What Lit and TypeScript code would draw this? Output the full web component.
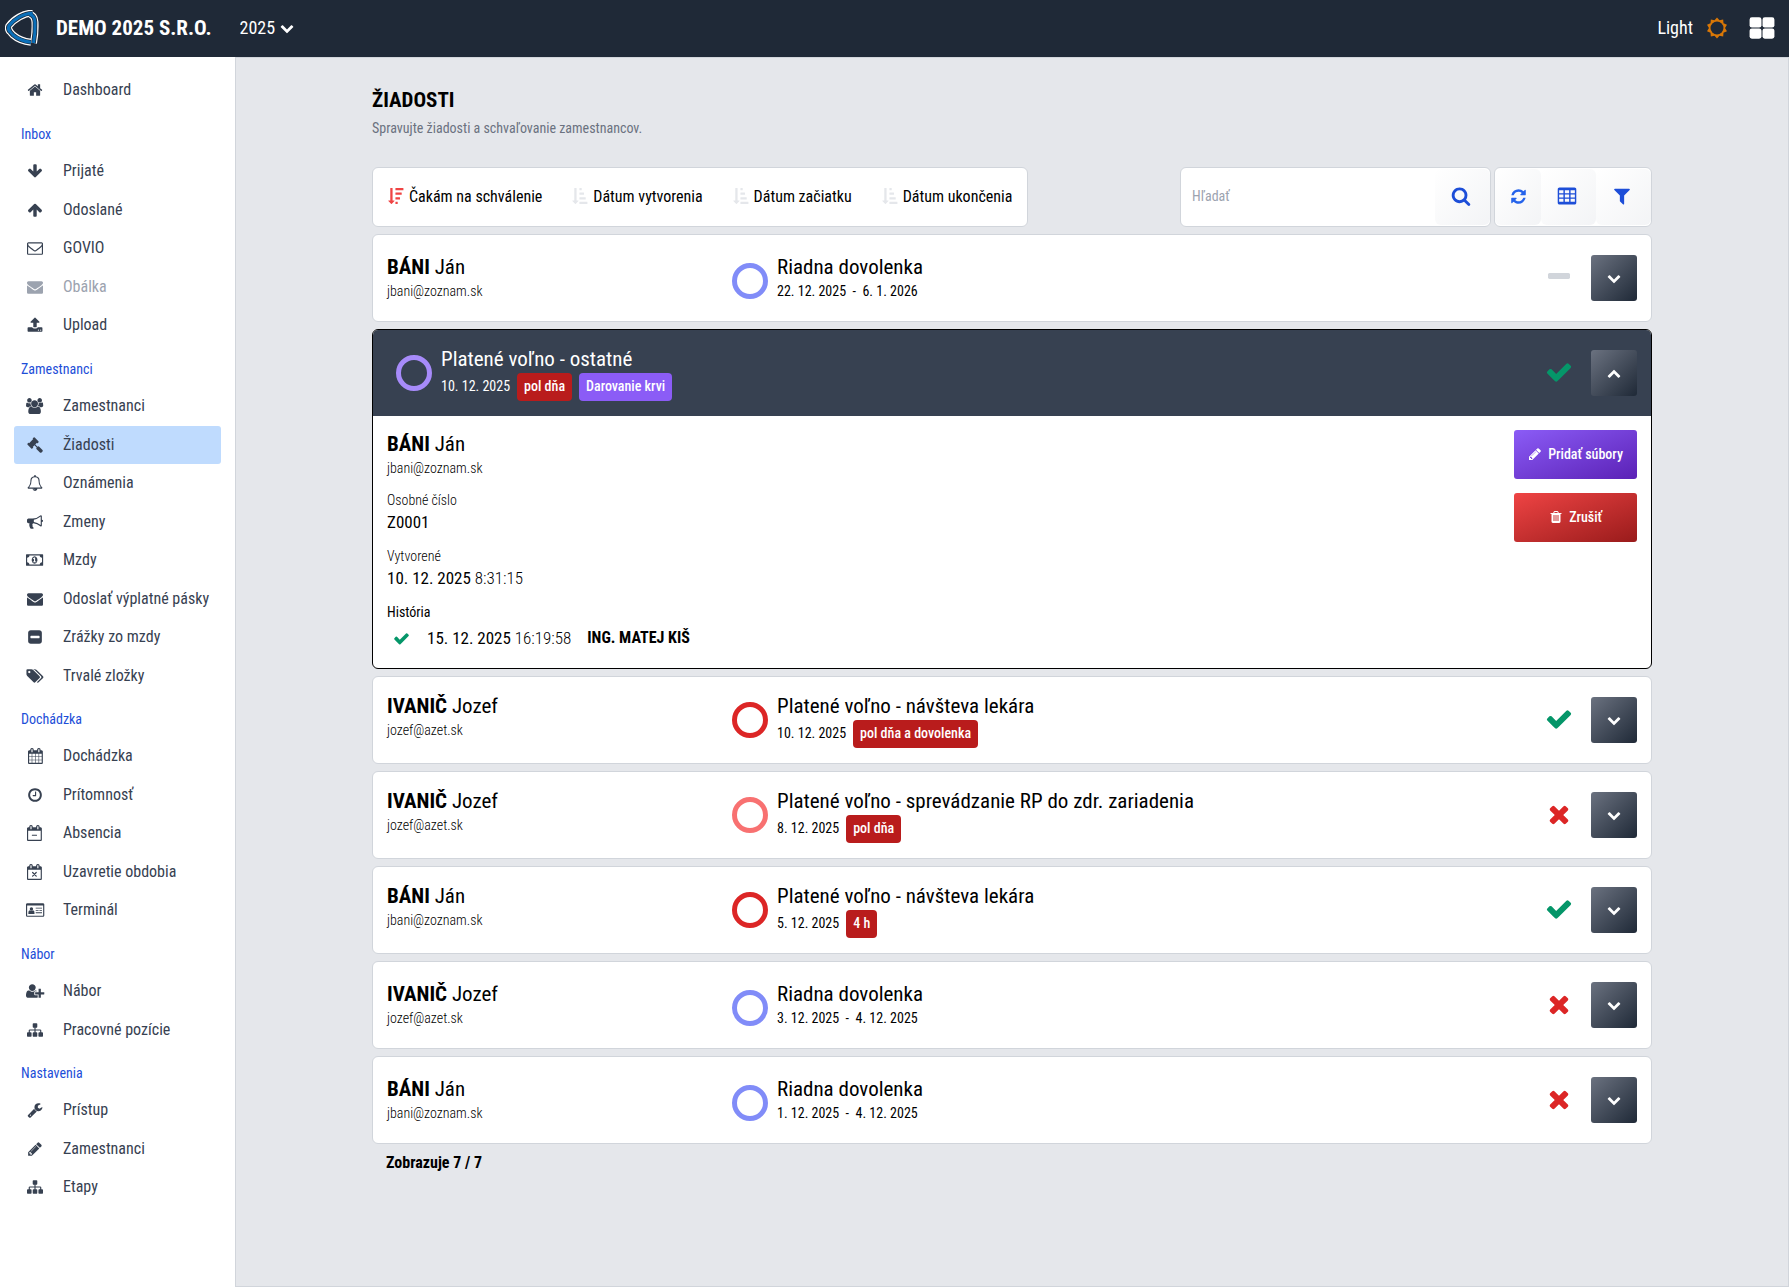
import { LitElement, html, svg, css, nothing } from "lit";
import { customElement, property } from "lit/decorators.js";
import { classMap } from "lit/directives/class-map.js";

const CAL =
  "M1536 256q52 0 90 38t38 90v1280q0 52-38 90t-90 38h-1408q-52 0-90-38t-38-90v-1280q0-52 38-90t90-38h128v-96q0-66 47-113t113-47h64q66 0 113 47t47 113v96h384v-96q0-66 47-113t113-47h64q66 0 113 47t47 113v96h128zm-384-96v288q0 14 9 23t23 9h64q14 0 23-9t9-23v-288q0-14-9-23t-23-9h-64q-14 0-23 9t-9 23zm-768 0v288q0 14 9 23t23 9h64q14 0 23-9t9-23v-288q0-14-9-23t-23-9h-64q-14 0-23 9t-9 23zm1152 1504v-1024h-1408v1024h1408z";
const SORT_ARROW =
  "M736 1440q0 12-10 24l-319 319q-10 9-23 9-12 0-23-9l-320-320q-15-16-7-35 8-20 30-20h192v-1376q0-14 9-23t23-9h192q14 0 23 9t9 23v1376h192q14 0 23 9t9 23z";

const sunPoints = Array.from({ length: 20 }, (_, i) => {
  const r = i % 2 ? 720 : 940;
  const a = (Math.PI * i) / 10 - Math.PI / 2;
  return `${Math.round(896 + r * Math.cos(a))},${Math.round(896 + r * Math.sin(a))}`;
}).join(" ");

const p = (d: string) => svg`<path d=${d}></path>`;

/* Each glyph: drawing, then width of its em box (height is always 1792). */
const ICONS: Record<string, [unknown, number]> = {
  home: [p("M1472 992v480q0 26-19 45t-45 19h-384v-384h-256v384h-384q-26 0-45-19t-19-45v-480q0-1 .5-3t.5-3l575-474 575 474q1 2 1 6zm223-69l-62 74q-8 9-21 11h-3q-13 0-21-7l-692-577-692 577q-12 8-24 7-13-2-21-11l-62-74q-8-10-7-23.5t11-21.5l719-599q32-26 76-26t76 26l244 204v-195q0-14 9-23t23-9h192q14 0 23 9t9 23v408l219 182q10 8 11 21.5t-7 23.5z"), 1792],
  down: [p("M1675 832q0 53-37 90l-651 652q-39 37-91 37-53 0-90-37l-651-652q-38-36-38-90 0-53 38-91l74-75q39-37 91-37 53 0 90 37l294 294v-704q0-52 38-90t90-38h128q52 0 90 38t38 90v704l294-294q37-37 90-37 52 0 91 37l75 75q37 39 37 91z"), 1792],
  up: [p("M1675 971q0 51-37 90l-75 75q-38 38-91 38-54 0-90-38l-294-293v704q0 52-37.5 84.5t-90.5 32.5h-128q-53 0-90.5-32.5t-37.5-84.5v-704l-294 293q-36 38-90 38t-90-38l-75-75q-38-38-38-90 0-53 38-91l651-651q35-37 90-37 54 0 91 37l651 651q37 39 37 91z"), 1792],
  mailo: [p("M1664 1504v-768q-32 36-69 66-268 206-426 338-51 43-83 67t-86.5 48.5-102.5 24.5h-2q-48 0-102.5-24.5t-86.5-48.5-83-67q-158-132-426-338-37-30-69-66v768q0 13 9.5 22.5t22.5 9.5h1472q13 0 22.5-9.5t9.5-22.5zm0-1051v-24.5l-.5-13-3-12.5-5.5-9-9-7.5-14-2.5h-1472q-13 0-22.5 9.5t-9.5 22.5q0 168 147 284 193 152 401 317 6 5 35 29.5t46 37.5 44.5 31.5 50.5 27.5 43 9h2q20 0 43-9t50.5-27.5 44.5-31.5 46-37.5 35-29.5q208-165 401-317 54-43 100.5-115.5t46.5-131.5zm128-37v1088q0 66-47 113t-113 47h-1472q-66 0-113-47t-47-113v-1088q0-66 47-113t113-47h1472q66 0 113 47t47 113z"), 1792],
  mail: [p("M1792 710v794q0 66-47 113t-113 47h-1472q-66 0-113-47t-47-113v-794q44 49 101 87 362 246 497 345 57 42 92.5 65.5t94.5 48 110 24.5h2q51 0 110-24.5t94.5-48 92.5-65.5q170-123 498-345 57-39 100-87zm0-294q0 79-49 151t-122 123q-376 261-468 325-10 7-42.5 30.5t-54 38-52 32.5-57.5 27-50 9h-2q-23 0-50-9t-57.5-27-52-32.5-54-38-42.5-30.5q-91-64-262-182.5t-205-142.5q-62-42-117-115.5t-55-136.5q0-78 41.5-130t118.5-52h1472q65 0 112.5 47t47.5 113z"), 1792],
  upload: [p("M1344 1472q0-26-19-45t-45-19-45 19-19 45 19 45 45 19 45-19 19-45zm256 0q0-26-19-45t-45-19-45 19-19 45 19 45 45 19 45-19 19-45zm128-224v320q0 40-28 68t-68 28h-1472q-40 0-68-28t-28-68v-320q0-40 28-68t68-28h427q21 56 70.5 92t110.5 36h256q61 0 110.5-36t70.5-92h427q40 0 68 28t28 68zm-325-648q-17 40-59 40h-256v448q0 26-19 45t-45 19h-256q-26 0-45-19t-19-45v-448h-256q-42 0-59-40-17-39 14-69l448-448q18-19 45-19t45 19l448 448q31 30 14 69z"), 1728],
  users: [svg`<g transform="translate(64 0)">${p("M529 896q-162 5-265 128h-134q-82 0-138-40.5t-56-118.5q0-353 124-353 6 0 43.5 21t97.5 42.5 119 21.5q67 0 133-23-5 37-5 66 0 159 93 290zm1071 637q0 120-73 189.5t-194 69.5h-874q-121 0-194-69.5t-73-189.5q0-53 3.5-103.5t14-109 26.5-108.5 43-97.5 62-81 85.5-53.5 111.5-20q10 0 43 21.5t73 48 107 48 135 21.5 135-21.5 107-48 73-48 43-21.5q61 0 111.5 20t85.5 53.5 62 81 43 97.5 26.5 108.5 14 109 3.5 103.5zm-1024-1277q0 106-75 181t-181 75-181-75-75-181 75-181 181-75 181 75 75 181zm704 384q0 159-112.5 271.5t-271.5 112.5-271.5-112.5-112.5-271.5 112.5-271.5 271.5-112.5 271.5 112.5 112.5 271.5zm576 225q0 78-56 118.5t-138 40.5h-134q-103-123-265-128 93-131 93-290 0-29-5-66 66 23 133 23 59 0 119-21.5t97.5-42.5 43.5-21q124 0 124 353zm-128-609q0 106-75 181t-181 75-181-75-75-181 75-181 181-75 181 75 75 181z")}</g>`, 1920],
  gavel: [p("M1771 1536q0 53-37 90l-107 108q-39 37-91 37-53 0-90-37l-363-364q-38-36-38-90 0-53 43-96l-256-256-126 126q-14 14-34 14t-34-14q2 2 12.5 12t12.5 13 10 11.5 10 13.5 6 13.5 5.5 16.5 1.5 18q0 38-28 68-3 3-16.5 18t-19 20.5-18.5 16.5-22 15.5-22 9-26 4.5q-40 0-68-28l-408-408q-28-28-28-68 0-13 4.5-26t9-22 15.5-22 16.5-18.5 20.5-19 18-16.5q30-28 68-28 10 0 18 1.5t16.5 5.5 13.5 6 13.5 10 11.5 10 13 12.5 12 12.5q-14-14-14-34t14-34l348-348q14-14 34-14t34 14q-2-2-12.5-12t-12.5-13-10-11.5-10-13.5-6-13.5-5.5-16.5-1.5-18q0-38 28-68 3-3 16.5-18t19-20.5 18.5-16.5 22-15.5 22-9 26-4.5q40 0 68 28l408 408q28 28 28 68 0 13-4.5 26t-9 22-15.5 22-16.5 18.5-20.5 19-18 16.5q-30 28-68 28-10 0-18-1.5t-16.5-5.5-13.5-6-13.5-10-11.5-10-13-12.5-12-12.5q14 14 14 34t-14 34l-126 126 256 256q43-43 96-43 52 0 91 37l363 363q37 39 37 91z"), 1792],
  bell: [p("M912 1696q0-16-16-16-59 0-101.5-42.5t-42.5-101.5q0-16-16-16t-16 16q0 73 51.5 124.5t124.5 51.5q16 0 16-16zm-666-288h1300q-266-300-266-832 0-51-24-105t-69-103-121.5-80.5-169.5-31.5-169.5 31.5-121.5 80.5-69 103-24 105q0 532-266 832zm1482 0q0 52-38 90t-90 38h-448q0 106-75 181t-181 75-181-75-75-181h-448q-52 0-90-38t-38-90q50-42 91-88t85-119.5 74.5-158.5 50-206 19.5-260q0-152 117-282.5t307-158.5q-8-19-8-39 0-40 28-68t68-28 68 28 28 68q0 20-8 39 190 28 307 158.5t117 282.5q0 139 19.5 260t50 206 74.5 158.5 85 119.5 91 88z"), 1792],
  horn: [p("M1664 640q53 0 90.5 37.5t37.5 90.5-37.5 90.5-90.5 37.5v384q0 52-38 90t-90 38q-417-347-812-380-58 19-91 66t-31 100.5 40 92.5q-20 33-23 65.5t6 58 33.5 55 48 50 61.5 50.5q-29 58-111.5 83t-168.5 11.5-132-55.5q-7-23-29.5-87.5t-32-94.5-23-89-15-101 3.5-98.5 22-110.5h-122q-66 0-113-47t-47-113v-192q0-66 47-113t113-47h480q435 0 896-384 52 0 90 38t38 90v384zm-128 604v-954q-394 302-768 343v270q377 42 768 341z"), 1792],
  money: [p("M768 1152h384v-96h-128v-448h-114l-148 137 77 80q42-37 55-57h2v288h-128v96zm512-256q0 70-21 142t-59.5 134-101.5 101-138 39-138-39-101.5-101-59.5-134-21-142 21-142 59.5-134 101.5-101 138-39 138 39 101.5 101 59.5 134 21 142zm512 256v-512q-106 0-181-75t-75-181h-1152q0 106-75 181t-181 75v512q106 0 181 75t75 181h1152q0-106 75-181t181-75zm128-832v1152q0 26-19 45t-45 19h-1792q-26 0-45-19t-19-45v-1152q0-26 19-45t45-19h1792q26 0 45 19t19 45z"), 1920],
  minussq: [p("M1408 960v-128q0-26-19-45t-45-19h-896q-26 0-45 19t-19 45v128q0 26 19 45t45 19h896q26 0 45-19t19-45zm256-544v960q0 119-84.5 203.5t-203.5 84.5h-960q-119 0-203.5-84.5t-84.5-203.5v-960q0-119 84.5-203.5t203.5-84.5h960q119 0 203.5 84.5t84.5 203.5z"), 1792],
  tags: [p("M384 448q0-53-37.5-90.5t-90.5-37.5-90.5 37.5-37.5 90.5 37.5 90.5 90.5 37.5 90.5-37.5 37.5-90.5zm1067 576q0 53-37 90l-491 492q-39 37-91 37-53 0-90-37l-715-716q-38-37-64.5-101t-26.5-117v-416q0-52 38-90t90-38h416q53 0 117 26.5t102 64.5l715 714q37 39 37 91zm384 0q0 53-37 90l-491 492q-39 37-91 37-36 0-59-14t-53-45l470-470q37-37 37-90 0-52-37-91l-715-714q-38-38-102-64.5t-117-26.5h224q53 0 117 26.5t102 64.5l715 714q37 39 37 91z"), 1856],
  cal: [svg`<g transform="translate(-64 0)">${p("M192 1664h288v-288h-288v288zm352 0h320v-288h-320v288zm-352-352h288v-320h-288v320zm352 0h320v-320h-320v320zm-352-384h288v-288h-288v288zm736 736h320v-288h-320v288zm-384-736h320v-288h-320v288zm768 736h288v-288h-288v288zm-384-352h320v-320h-320v320zm-352-864v-288q0-13-9.5-22.5t-22.5-9.5h-64q-13 0-22.5 9.5t-9.5 22.5v288q0 13 9.5 22.5t22.5 9.5h64q13 0 22.5-9.5t9.5-22.5zm736 864h288v-320h-288v320zm-384-384h320v-288h-320v288zm384 0h288v-288h-288v288zm32-480v-288q0-13-9.5-22.5t-22.5-9.5h-64q-13 0-22.5 9.5t-9.5 22.5v288q0 13 9.5 22.5t22.5 9.5h64q13 0 22.5-9.5t9.5-22.5zm384-64v1280q0 52-38 90t-90 38h-1408q-52 0-90-38t-38-90v-1280q0-52 38-90t90-38h128v-96q0-66 47-113t113-47h64q66 0 113 47t47 113v96h384v-96q0-66 47-113t113-47h64q66 0 113 47t47 113v96h128q52 0 90 38t38 90z")}</g>`, 1664],
  clock: [p("M1024 544v448q0 14-9 23t-23 9h-320q-14 0-23-9t-9-23v-64q0-14 9-23t23-9h224v-352q0-14 9-23t23-9h64q14 0 23 9t9 23zm416 352q0-148-73-273t-198-198-273-73-273 73-198 198-73 273 73 273 198 198 273 73 273-73 198-198 73-273zm224 0q0 209-103 385.5t-279.5 279.5-385.5 103-385.5-103-279.5-279.5-103-385.5 103-385.5 279.5-279.5 385.5-103 385.5 103 279.5 279.5 103 385.5z"), 1792],
  calminus: [svg`${p(CAL)}<rect x="544" y="1088" width="576" height="128" rx="32"></rect>`, 1792],
  caltimes: [svg`${p(CAL)}<path d="M630 950l404 404M1034 950l-404 404" fill="none" stroke="currentColor" stroke-width="136" stroke-linecap="round"></path>`, 1792],
  card: [svg`<path fill-rule="evenodd" d="M160 128h1728q66 0 113 47t47 113v1216q0 66-47 113t-113 47h-1728q-66 0-113-47t-47-113v-1216q0-66 47-113t113-47zM128 384v1120q0 32 32 32h1728q32 0 32-32v-1120z"></path><circle cx="608" cy="780" r="190"></circle><path d="M256 1248q0-310 180-320 172 130 344 0 180 10 180 320 0 96-96 96h-512q-96 0-96-96zM1088 640h704v96h-704zM1088 896h320v96h-320zM1504 896h288v96h-288zM1088 1152h704v96h-704z"></path>`, 2048],
  userplus: [p("M704 896q-159 0-271.5-112.5t-112.5-271.5 112.5-271.5 271.5-112.5 271.5 112.5 112.5 271.5-112.5 271.5-271.5 112.5zm960 128h352q13 0 22.5 9.5t9.5 22.5v192q0 13-9.5 22.5t-22.5 9.5h-352v352q0 13-9.5 22.5t-22.5 9.5h-192q-13 0-22.5-9.5t-9.5-22.5v-352h-352q-13 0-22.5-9.5t-9.5-22.5v-192q0-13 9.5-22.5t22.5-9.5h352v-352q0-13 9.5-22.5t22.5-9.5h192q13 0 22.5 9.5t9.5 22.5v352zm-736 224q0 52 38 90t90 38h256v238q-68 50-171 50h-874q-121 0-194-69t-73-190q0-53 3.5-103.5t14-109 26.5-108.5 43-97.5 62-81 85.5-53.5 111.5-20q19 0 39 17 79 61 154.5 91.5t164.5 30.5 164.5-30.5 154.5-91.5q20-17 39-17 132 0 217 96h-223q-52 0-90 38t-38 90v192z"), 2048],
  sitemap: [p("M1792 1248v320q0 40-28 68t-68 28h-320q-40 0-68-28t-28-68v-320q0-40 28-68t68-28h96v-192h-512v192h96q40 0 68 28t28 68v320q0 40-28 68t-68 28h-320q-40 0-68-28t-28-68v-320q0-40 28-68t68-28h96v-192h-512v192h96q40 0 68 28t28 68v320q0 40-28 68t-68 28h-320q-40 0-68-28t-28-68v-320q0-40 28-68t68-28h96v-192q0-52 38-90t90-38h512v-192h-96q-40 0-68-28t-28-68v-320q0-40 28-68t68-28h320q40 0 68 28t28 68v320q0 40-28 68t-68 28h-96v192h512q52 0 90 38t38 90v192h96q40 0 68 28t28 68z"), 1792],
  wrench: [p("M448 1472q0-26-19-45t-45-19-45 19-19 45 19 45 45 19 45-19 19-45zm644-420l-682 682q-37 37-90 37-52 0-91-37l-106-108q-38-36-38-90 0-53 38-91l681-681q39 98 114.5 173.5t173.5 114.5zm634-435q0 39-23 106-47 134-164.5 217.5t-258.5 83.5q-185 0-316.5-131.5t-131.5-316.5 131.5-316.5 316.5-131.5q58 0 121.5 16.5t107.5 46.5q16 11 16 28t-16 28l-293 169v224l193 107q5-3 79-48.5t135.5-81 70.5-35.5q15 0 23.5 10t8.5 25z"), 1792],
  pencil: [p("M491 1536l91-91-235-235-91 91v107h128v128h107zm523-928q0-22-22-22-10 0-17 7l-542 542q-7 7-7 17 0 22 22 22 10 0 17-7l542-542q7-7 7-17zm-54-192l416 416-832 832h-416v-416zm683 96q0 53-37 90l-166 166-416-416 166-165q36-38 90-38 53 0 91 38l235 234q37 39 37 91z"), 1792],
  trash: [p("M704 1376v-704q0-14-9-23t-23-9h-64q-14 0-23 9t-9 23v704q0 14 9 23t23 9h64q14 0 23-9t9-23zm256 0v-704q0-14-9-23t-23-9h-64q-14 0-23 9t-9 23v704q0 14 9 23t23 9h64q14 0 23-9t9-23zm256 0v-704q0-14-9-23t-23-9h-64q-14 0-23 9t-9 23v704q0 14 9 23t23 9h64q14 0 23-9t9-23zm-544-992h448l-48-117q-7-9-17-11h-317q-10 2-17 11zm928 32v64q0 14-9 23t-23 9h-96v948q0 83-47 143.5t-113 60.5h-832q-66 0-113-58.5t-47-141.5v-952h-96q-14 0-23-9t-9-23v-64q0-14 9-23t23-9h309l70-167q15-37 54-63t79-26h320q40 0 79 26t54 63l70 167h309q14 0 23 9t9 23z"), 1792],
  check: [p("M1671 566q0 40-28 68l-724 724-136 136q-28 28-68 28t-68-28l-136-136-362-362q-28-28-28-68t28-68l136-136q28-28 68-28t68 28l294 295 656-657q28-28 68-28t68 28l136 136q28 28 28 68z"), 1792],
  times: [p("M1490 1322q0 40-28 68l-136 136q-28 28-68 28t-68-28l-294-294-294 294q-28 28-68 28t-68-28l-136-136q-28-28-28-68t28-68l294-294-294-294q-28-28-28-68t28-68l136-136q28-28 68-28t68 28l294 294 294-294q28-28 68-28t68 28l136 136q28 28 28 68t-28 68l-294 294 294 294q28 28 28 68z"), 1792],
  minus: [p("M1600 736v192q0 40-28 68t-68 28h-1216q-40 0-68-28t-28-68v-192q0-40 28-68t68-28h1216q40 0 68 28t28 68z"), 1792],
  chevdown: [p("M1683 808l-742 741q-19 19-45 19t-45-19l-742-741q-19-19-19-45.5t19-45.5l166-165q19-19 45-19t45 19l531 531 531-531q19-19 45-19t45 19l166 165q19 19 19 45.5t-19 45.5z"), 1792],
  chevup: [p("M1683 1331l-166 165q-19 19-45 19t-45-19l-531-531-531 531q-19 19-45 19t-45-19l-166-165q-19-19-19-45.5t19-45.5l742-741q19-19 45-19t45 19l742 741q19 19 19 45.5t-19 45.5z"), 1792],
  search: [p("M1216 832q0-185-131.5-316.5t-316.5-131.5-316.5 131.5-131.5 316.5 131.5 316.5 316.5 131.5 316.5-131.5 131.5-316.5zm512 832q0 52-38 90t-90 38q-54 0-90-38l-343-342q-179 124-399 124-143 0-273.5-55.5t-225-150-150-225-55.5-273.5 55.5-273.5 150-225 225-150 273.5-55.5 273.5 55.5 225 150 150 225 55.5 273.5q0 220-124 399l343 343q37 37 37 90z"), 1792],
  refresh: [p("M1639 1056q0 5-1 7-64 268-268 434.5t-478 166.5q-146 0-282.5-55t-243.5-157l-129 129q-19 19-45 19t-45-19-19-45v-448q0-26 19-45t45-19h448q26 0 45 19t19 45-19 45l-137 137q71 66 161 102t187 36q134 0 250-65t186-179q11-17 53-117 8-23 30-23h192q13 0 22.5 9.5t9.5 22.5zm25-800v448q0 26-19 45t-45 19h-448q-26 0-45-19t-19-45 19-45l138-138q-148-137-349-137-134 0-250 65t-186 179q-11 17-53 117-8 23-30 23h-199q-13 0-22.5-9.5t-9.5-22.5v-7q65-268 270-434.5t480-166.5q146 0 284 55.5t245 156.5l130-129q19-19 45-19t45 19 19 45z"), 1792],
  table: [svg`<path fill-rule="evenodd" d="M224 128h1344q66 0 113 47t47 113v1216q0 66-47 113t-113 47h-1344q-66 0-113-47t-47-113v-1216q0-66 47-113t113-47zM192 384v256h384v-256zM704 384v256h384v-256zM1216 384v256h384v-256zM192 768v256h384v-256zM704 768v256h384v-256zM1216 768v256h384v-256zM192 1152v256h384v-256zM704 1152v256h384v-256zM1216 1152v256h384v-256z"></path>`, 1792],
  filter: [p("M1595 295q17 41-14 70l-493 493v742q0 42-39 59-13 5-25 5-27 0-45-19l-256-256q-19-19-19-45v-486l-493-493q-31-29-14-70 17-39 59-39h1280q42 0 59 39z"), 1792],
  desc: [svg`${p(SORT_ARROW)}<rect x="832" y="0" width="896" height="256" rx="32"></rect><rect x="832" y="512" width="704" height="256" rx="32"></rect><rect x="832" y="1024" width="512" height="256" rx="32"></rect><rect x="832" y="1536" width="256" height="256" rx="32"></rect>`, 1792],
  asc: [svg`${p(SORT_ARROW)}<rect x="832" y="0" width="256" height="256" rx="32"></rect><rect x="832" y="512" width="512" height="256" rx="32"></rect><rect x="832" y="1024" width="704" height="256" rx="32"></rect><rect x="832" y="1536" width="896" height="256" rx="32"></rect>`, 1792],
  sun: [svg`<polygon points=${sunPoints}></polygon><circle class="hole" cx="896" cy="896" r="580"></circle>`, 1792],
  grid: [svg`<rect x="40" y="160" width="820" height="700" rx="160"></rect><rect x="932" y="160" width="820" height="700" rx="160"></rect><rect x="40" y="932" width="820" height="700" rx="160"></rect><rect x="932" y="932" width="820" height="700" rx="160"></rect>`, 1792],
};

@customElement("ui-icon")
class UiIcon extends LitElement {
  @property() name = "";
  static styles = css`
    :host {
      display: inline-flex;
      flex: none;
      justify-content: center;
      align-items: center;
    }
    svg {
      display: block;
      height: 1em;
      width: auto;
      fill: currentColor;
      overflow: visible;
    }
    .hole {
      fill: #1f2937;
    }
  `;
  render() {
    const [shape, width] = ICONS[this.name];
    return html`<svg viewBox="0 0 ${width} 1792" aria-hidden="true">${shape}</svg>`;
  }
}

type NavItem = [icon: string, label: string, state?: string];
const NAV: { title?: string; items: NavItem[] }[] = [
  { items: [["home", "Dashboard"]] },
  {
    title: "Inbox",
    items: [["down", "Prijaté"], ["up", "Odoslané"], ["mailo", "GOVIO"], ["mail", "Obálka", "muted"], ["upload", "Upload"]],
  },
  {
    title: "Zamestnanci",
    items: [["users", "Zamestnanci"], ["gavel", "Žiadosti", "active"], ["bell", "Oznámenia"], ["horn", "Zmeny"], ["money", "Mzdy"], ["mail", "Odoslať výplatné pásky"], ["minussq", "Zrážky zo mzdy"], ["tags", "Trvalé zložky"]],
  },
  {
    title: "Dochádzka",
    items: [["cal", "Dochádzka"], ["clock", "Prítomnosť"], ["calminus", "Absencia"], ["caltimes", "Uzavretie obdobia"], ["card", "Terminál"]],
  },
  { title: "Nábor", items: [["userplus", "Nábor"], ["sitemap", "Pracovné pozície"]] },
  { title: "Nastavenia", items: [["wrench", "Prístup"], ["pencil", "Zamestnanci"], ["sitemap", "Etapy"]] },
];

interface Req {
  last: string;
  first: string;
  mail: string;
  ring: string;
  type: string;
  date: string;
  tags?: [string, string][];
  status: "check" | "times" | "minus";
  open?: boolean;
}
const BANI = { last: "BÁNI", first: "Ján", mail: "jbani@zoznam.sk" };
const IVANIC = { last: "IVANIČ", first: "Jozef", mail: "jozef@azet.sk" };
const REQUESTS: Req[] = [
  { ...BANI, ring: "indigo", type: "Riadna dovolenka", date: "22. 12. 2025  -  6. 1. 2026", status: "minus" },
  { ...BANI, ring: "violet", type: "Platené voľno - ostatné", date: "10. 12. 2025", tags: [["pol dňa", "red"], ["Darovanie krvi", "violet"]], status: "check", open: true },
  { ...IVANIC, ring: "red", type: "Platené voľno - návšteva lekára", date: "10. 12. 2025", tags: [["pol dňa a dovolenka", "red"]], status: "check" },
  { ...IVANIC, ring: "rose", type: "Platené voľno - sprevádzanie RP do zdr. zariadenia", date: "8. 12. 2025", tags: [["pol dňa", "red"]], status: "times" },
  { ...BANI, ring: "red", type: "Platené voľno - návšteva lekára", date: "5. 12. 2025", tags: [["4 h", "red"]], status: "check" },
  { ...IVANIC, ring: "indigo", type: "Riadna dovolenka", date: "3. 12. 2025  -  4. 12. 2025", status: "times" },
  { ...BANI, ring: "indigo", type: "Riadna dovolenka", date: "1. 12. 2025  -  4. 12. 2025", status: "times" },
];

const base = css`
  * {
    box-sizing: border-box;
  }
  button,
  input,
  select {
    font: inherit;
    color: inherit;
    border: 0;
    margin: 0;
    padding: 0;
    background: none;
  }
  button {
    cursor: pointer;
  }
  a {
    color: inherit;
    text-decoration: none;
  }
  h1,
  h2,
  p,
  ul,
  dl,
  dd {
    margin: 0;
    padding: 0;
    list-style: none;
    font-size: inherit;
    font-weight: inherit;
  }
`;

@customElement("side-nav")
class SideNav extends LitElement {
  static styles = [
    base,
    css`
      :host {
        display: block;
        padding: 14px 14px 40px;
        color: #374151;
        background: #fff;
      }
      .title {
        padding: 14px 7px 8px;
        font-size: 14px;
        line-height: 20px;
        color: #1d4ed8;
      }
      .item:nth-child(odd) {
        margin-bottom: 1px;
      }
      .link {
        display: flex;
        align-items: center;
        height: 38px;
        gap: 18px;
        padding-left: 11px;
        border-radius: 3px;
        font-size: 16px;
        line-height: 24px;
      }
      .glyph {
        width: 20px;
        font-size: 16px;
      }
      .muted {
        color: #9ca3af;
      }
      .active {
        background: #bfdbfe;
      }
    `,
  ];
  render() {
    return html`<nav aria-label="Menu">
      ${NAV.map(
        (g) => html`${g.title ? html`<h2 class="title">${g.title}</h2>` : nothing}
          <ul>
            ${g.items.map(
              ([icon, label, state]) => html`<li class="item">
                <a href="#" class=${classMap({ link: true, muted: state === "muted", active: state === "active" })}
                  ><ui-icon class="glyph" name=${icon}></ui-icon><span>${label}</span></a
                >
              </li>`
            )}
          </ul>`
      )}
    </nav>`;
  }
}

@customElement("request-card")
class RequestCard extends LitElement {
  @property({ attribute: false }) req!: Req;
  static styles = [
    base,
    css`
      :host {
        display: block;
      }
      .card {
        border: 1px solid #d1d5db;
        border-radius: 6px;
        background: #fff;
        overflow: hidden;
      }
      .card.open {
        border-color: #000;
      }
      .row {
        display: flex;
        align-items: center;
        min-height: 86px;
        padding: 0 14px;
      }
      .open .row {
        padding-left: 23px;
        color: #fff;
        background: #374151;
      }
      .cols {
        display: grid;
        flex: 1;
        grid-template-columns: 345px 1fr;
      }
      .open .cols {
        grid-template-columns: 1fr;
      }
      .name,
      .type {
        font-size: 21px;
        line-height: 28px;
      }
      .mail,
      .label {
        font-size: 14px;
        font-weight: 300;
        line-height: 20px;
      }
      .kind {
        display: flex;
        gap: 9px;
      }
      .ring {
        flex: none;
        width: 36px;
        height: 36px;
        margin-top: 10px;
        border: 5px solid;
        border-radius: 50%;
      }
      .ring.indigo {
        border-color: #818cf8;
      }
      .ring.violet {
        border-color: #a78bfa;
      }
      .ring.red {
        border-color: #dc2626;
      }
      .ring.rose {
        border-color: #f87171;
      }
      .when {
        display: flex;
        align-items: center;
        gap: 7px;
        font-size: 14px;
        line-height: 20px;
        white-space: pre;
      }
      .date {
        padding-bottom: 2px;
      }
      .tag {
        padding: 3px 7px 5px;
        border-radius: 4px;
        font-weight: 500;
        color: #fff;
      }
      .tag.red {
        background: #b91c1c;
      }
      .tag.violet {
        background: #8b5cf6;
      }
      .status {
        padding-bottom: 2px;
        font-size: 28px;
        margin-right: 18px;
      }
      .check {
        color: #059669;
      }
      .times {
        color: #dc2626;
      }
      .minus {
        color: #d1d5db;
      }
      .toggle {
        display: flex;
        align-items: center;
        justify-content: center;
        width: 46px;
        height: 46px;
        border-radius: 3px;
        font-size: 14px;
        color: #fff;
        background: linear-gradient(135deg, #6b7280, #1f2937);
      }
      .body {
        display: flex;
        justify-content: space-between;
        align-items: flex-start;
        padding: 14px 14px 18px;
      }
      .label {
        margin-top: 12px;
      }
      .label.strong {
        font-weight: 400;
      }
      .value {
        font-size: 17px;
        line-height: 24px;
      }
      .light {
        font-weight: 300;
      }
      .history {
        display: flex;
        align-items: center;
        margin-top: 4px;
      }
      .history .check {
        width: 28px;
        margin-right: 12px;
        font-size: 17px;
      }
      .who {
        margin-left: 16px;
        font-size: 16px;
        font-weight: 700;
      }
      .actions {
        display: grid;
        gap: 14px;
      }
      .action {
        display: flex;
        align-items: center;
        justify-content: center;
        gap: 6px;
        height: 49px;
        padding: 0 14px 2px;
        border-radius: 3px;
        font-size: 14px;
        font-weight: 500;
        color: #fff;
      }
      .action.add {
        background: linear-gradient(to bottom right, #8b5cf6, #5b21b6);
      }
      .action.cancel {
        background: linear-gradient(to bottom right, #ef4444, #991b1b);
      }
    `,
  ];
  private person() {
    const { last, first, mail } = this.req;
    return html`<div>
      <p class="name"><b>${last}</b> ${first}</p>
      <p class="mail">${mail}</p>
    </div>`;
  }
  private details() {
    return html`<div class="body">
      <div>
        ${this.person()}
        <dl>
          <dt class="label">Osobné číslo</dt>
          <dd class="value">Z0001</dd>
          <dt class="label">Vytvorené</dt>
          <dd class="value">10. 12. 2025 <span class="light">8:31:15</span></dd>
          <dt class="label strong">História</dt>
          <dd class="value history">
            <ui-icon class="check" name="check"></ui-icon>
            <span>15. 12. 2025 <span class="light">16:19:58</span></span>
            <span class="who">ING. MATEJ KIŠ</span>
          </dd>
        </dl>
      </div>
      <div class="actions">
        <button class="action add"><ui-icon name="pencil"></ui-icon>Pridať súbory</button>
        <button class="action cancel"><ui-icon name="trash"></ui-icon>Zrušiť</button>
      </div>
    </div>`;
  }
  render() {
    const r = this.req;
    return html`<article class=${classMap({ card: true, open: !!r.open })}>
      <div class="row">
        <div class="cols">
          ${r.open ? nothing : this.person()}
          <div class="kind">
            <span class="ring ${r.ring}"></span>
            <div>
              <p class="type">${r.type}</p>
              <p class="when"><span class="date">${r.date}</span>${(r.tags ?? []).map(([t, c]) => html`<span class="tag ${c}">${t}</span>`)}</p>
            </div>
          </div>
        </div>
        <ui-icon class="status ${r.status}" name=${r.status}></ui-icon>
        <button class="toggle" aria-label="Detail" aria-expanded=${r.open ? "true" : "false"}>
          <ui-icon name=${r.open ? "chevup" : "chevdown"}></ui-icon>
        </button>
      </div>
      ${r.open ? this.details() : nothing}
    </article>`;
  }
}

@customElement("app-root")
class AppRoot extends LitElement {
  static styles = [
    base,
    css`
      :host {
        display: grid;
        grid-template-rows: auto 1fr;
        grid-template-columns: 235px 1fr;
        min-height: 100vh;
        font-family: "Roboto Condensed", Roboto, "Liberation Sans", sans-serif;
        font-size: 16px;
        color: #000;
        background: #fff;
      }
      .top {
        grid-column: 1 / -1;
        display: flex;
        align-items: center;
        height: 57px;
        padding: 0 14px 2px 5px;
        color: #fff;
        background: #1f2937;
      }
      .logo {
        width: 34px;
        height: 36px;
      }
      .company {
        margin-left: 17px;
        font-size: 21px;
        font-weight: 700;
      }
      .year {
        display: flex;
        align-items: center;
        gap: 4px;
        margin-left: 28px;
        font-size: 18px;
      }
      .year select {
        appearance: none;
      }
      .caret {
        font-size: 14px;
      }
      .tools {
        display: flex;
        align-items: center;
        gap: 22px;
        margin-left: auto;
        font-size: 18px;
      }
      .theme,
      .apps {
        display: flex;
        align-items: center;
        gap: 14px;
      }
      .sun {
        font-size: 20px;
        color: #d97706;
      }
      .apps {
        font-size: 26px;
      }
      .main {
        padding: 28px 24px 48px;
        border: 1px solid #d1d5db;
        background: #e5e7eb;
      }
      .wrap {
        max-width: 1280px;
        margin: 0 auto;
      }
      .heading {
        font-size: 21px;
        font-weight: 700;
        line-height: 28px;
      }
      .sub {
        margin-top: 4px;
        font-size: 14px;
        line-height: 20px;
        color: #6b7280;
      }
      .bar {
        display: flex;
        gap: 3px;
        margin: 29px 0 7px;
      }
      .panel {
        display: flex;
        height: 60px;
        border: 1px solid #d1d5db;
        border-radius: 6px;
        background: #fff;
      }
      .sorts {
        margin-right: auto;
      }
      .sort {
        display: flex;
        align-items: center;
        gap: 5px;
        padding: 0 15px 2px;
      }
      .dim {
        color: #e5e7eb;
      }
      .hot {
        color: #ef4444;
      }
      .search {
        width: 311px;
      }
      .query {
        flex: 1;
        min-width: 0;
        padding: 0 11px 2px;
        font-size: 14px;
        outline: none;
      }
      .query::placeholder {
        color: #9ca3af;
        opacity: 1;
      }
      .tool {
        display: flex;
        align-items: center;
        justify-content: center;
        width: 55px;
        margin: 1px 0;
        padding: 0 3px 2px 0;
        border-radius: 6px;
        font-size: 20px;
        color: #1d4ed8;
        background: linear-gradient(to bottom right, #fff, #f3f4f6);
      }
      .tool.small {
        width: 46px;
        padding-right: 0;
        font-size: 17px;
        color: #2563eb;
      }
      .list {
        display: grid;
        gap: 7px;
      }
      .count {
        padding: 8px 14px;
        font-size: 16px;
        font-weight: 700;
        line-height: 22px;
      }
    `,
  ];
  private sort(label: string, hot = false) {
    return html`<button class="sort">
      <ui-icon class=${hot ? "hot" : "dim"} name=${hot ? "desc" : "asc"}></ui-icon>${label}
    </button>`;
  }
  private strand(color: string, width: number) {
    return svg`<g fill="none" stroke=${color} stroke-width=${width} stroke-linejoin="round">
      <path d="M27.500 3.200C19 3 9 9 3.800 16Q2.500 19 5 22"></path>
      <path d="M24.500 4.500Q29.500 5 30 12Q30.500 23 28.500 33"></path>
      <path d="M4 17Q3 20 8 25Q15 31 26 32.300"></path>
    </g>`;
  }
  render() {
    return html`
      <header class="top">
        <svg class="logo" viewBox="0 0 34 36" aria-hidden="true">
          ${this.strand("#fff", 7)} ${this.strand("#1f2937", 4.6)} ${this.strand("#0b6fb8", 3)}
        </svg>
        <span class="company">DEMO 2025 S.R.O.</span>
        <label class="year">
          <select aria-label="Rok">
            <option>2025</option>
          </select>
          <ui-icon class="caret" name="chevdown"></ui-icon>
        </label>
        <div class="tools">
          <button class="theme">Light<ui-icon class="sun" name="sun"></ui-icon></button>
          <button class="apps" aria-label="Aplikácie"><ui-icon name="grid"></ui-icon></button>
        </div>
      </header>
      <side-nav></side-nav>
      <main class="main">
        <div class="wrap">
          <h1 class="heading">ŽIADOSTI</h1>
          <p class="sub">Spravujte žiadosti a schvaľovanie zamestnancov.</p>
          <div class="bar">
            <div class="panel sorts">
              ${this.sort("Čakám na schválenie", true)} ${this.sort("Dátum vytvorenia")} ${this.sort("Dátum začiatku")}
              ${this.sort("Dátum ukončenia")}
            </div>
            <form class="panel search" role="search">
              <input class="query" type="search" aria-label="Hľadať" placeholder="Hľadať" />
              <button class="tool" type="button" aria-label="Hľadať"><ui-icon name="search"></ui-icon></button>
            </form>
            <div class="panel">
              <button class="tool small" aria-label="Obnoviť"><ui-icon name="refresh"></ui-icon></button>
              <button class="tool" aria-label="Tabuľka"><ui-icon name="table"></ui-icon></button>
              <button class="tool" aria-label="Filter"><ui-icon name="filter"></ui-icon></button>
            </div>
          </div>
          <div class="list">${REQUESTS.map((r) => html`<request-card .req=${r}></request-card>`)}</div>
          <p class="count">Zobrazuje 7 / 7</p>
        </div>
      </main>
    `;
  }
}
